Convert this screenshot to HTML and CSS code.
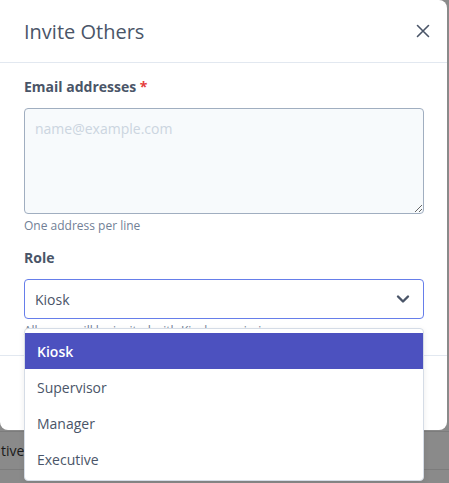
FILE: index.html
```html
<!DOCTYPE html>
<html>
<head>
<meta charset="utf-8">
<link rel="stylesheet" href="styles.css">
</head>
<body>
<div class="page">
  <div class="page-gap"></div>
  <div class="page-row"><span class="cell">tive</span></div>
</div>
<div class="overlay">
  <div class="modal">
    <div class="modal-header">
      <h2 class="modal-title">Invite Others</h2>
      <svg class="close" width="14" height="14" viewBox="0 0 14 14"><path d="M1.5 1.5 L12.5 12.5 M12.5 1.5 L1.5 12.5" stroke="#4a5568" stroke-width="1.6" fill="none" stroke-linecap="round"/></svg>
    </div>
    <div class="modal-body">
      <div class="field">
        <label class="label">Email addresses <span class="req">*</span></label>
        <textarea class="textarea" placeholder="name@example.com"></textarea>
        <div class="help">One address per line</div>
      </div>
      <div class="field field-role">
        <label class="label">Role</label>
        <div class="select">
          <span>Kiosk</span>
          <svg class="chev" width="14" height="10" viewBox="0 0 14 10"><path d="M2 2.5 L7 7.5 L12 2.5" stroke="#4a5568" stroke-width="2.4" fill="none" stroke-linecap="round" stroke-linejoin="round"/></svg>
        </div>
        <div class="help">All users will be invited with Kiosk permissions.</div>
      </div>
    </div>
    <div class="modal-footer">
      <button class="btn">Cancel</button>
      <button class="btn btn-primary">Send Invites</button>
    </div>
    <ul class="dropdown">
      <li class="opt active">Kiosk</li>
      <li class="opt">Supervisor</li>
      <li class="opt">Manager</li>
      <li class="opt">Executive</li>
    </ul>
  </div>
</div>
</body>
</html>
```
FILE: styles.css
```css
* { box-sizing: border-box; }
html, body { margin: 0; padding: 0; }
body {
  width: 449px;
  height: 483px;
  overflow: hidden;
  background: #8a8a8a;
  font-family: "Open Sans", "Noto Sans", sans-serif;
  color: #4a5568;
  position: relative;
}
.page-gap { height: 432px; border-bottom: 1px solid #7c7c7c; }
.page-row {
  height: 38px;
  border-bottom: 1px solid #7c7c7c;
  display: flex;
  align-items: center;
  font-size: 14px;
  color: #1a1a1a;
}
.cell { padding-left: 1px; }
.overlay {
  position: absolute;
  inset: 0;
}
.modal {
  position: relative;
  width: 447px;
  height: 430px;
  background: #fff;
  border-radius: 0 8px 8px 8px;
  display: flex;
  flex-direction: column;
}
.modal-header {
  height: 63px;
  border-bottom: 1px solid #e2e8f0;
  display: flex;
  align-items: center;
  justify-content: space-between;
  padding: 0 17px 0 24px;
}
.modal-title {
  margin: 0;
  font-size: 20px;
  font-weight: 400;
  color: #4a5568;
}
.close { display: block; }
.modal-body {
  padding: 14px 23px 16px 24px;
  display: flex;
  flex-direction: column;
  gap: 14px;
}
.field { display: flex; flex-direction: column; }
.label {
  font-size: 14px;
  font-weight: 700;
  line-height: 20px;
  margin-bottom: 11px;
  color: #4a5568;
}
.req { color: #e53e3e; }
.textarea {
  display: block;
  width: 400px;
  height: 106px;
  background: #f7fafc;
  border: 1px solid #a0aec0;
  border-radius: 4px;
  padding: 10px;
  font-family: inherit;
  font-size: 14px;
  line-height: 20px;
  color: #4a5568;
  resize: vertical;
}
.textarea::placeholder { color: #cbd5e0; }
.help {
  font-size: 12px;
  line-height: 16px;
  margin-top: 4px;
  color: #718096;
}
.select {
  width: 400px;
  height: 40px;
  border: 1px solid #667eea;
  border-radius: 4px;
  display: flex;
  align-items: center;
  justify-content: space-between;
  padding: 0 13px 0 10px;
  font-size: 14px;
  color: #4a5568;
}
.chev { display: block; }
.modal-footer {
  border-top: 1px solid #e2e8f0;
  flex: 1;
  display: flex;
  justify-content: flex-end;
  align-items: center;
  gap: 8px;
  padding: 0 24px;
}
.btn {
  height: 40px;
  padding: 0 16px;
  border: 1px solid #cbd5e0;
  border-radius: 4px;
  background: #fff;
  font-family: inherit;
  font-size: 14px;
  color: #4a5568;
}
.btn-primary { background: #4c51bf; color: #fff; border-color: #4c51bf; }
.dropdown {
  position: absolute;
  left: 24px;
  top: 328px;
  width: 400px;
  margin: 0;
  padding: 4px 0 3px;
  list-style: none;
  background: #fff;
  border: 1px solid #d5dce6;
  border-radius: 4px;
  box-shadow: 0 2px 6px rgba(0,0,0,0.08);
}
.opt {
  height: 36px;
  display: flex;
  align-items: center;
  padding: 0 12px;
  font-size: 14px;
  color: #4a5568;
}
.opt.active {
  background: #4c51bf;
  color: #fff;
  font-weight: 600;
}
```
